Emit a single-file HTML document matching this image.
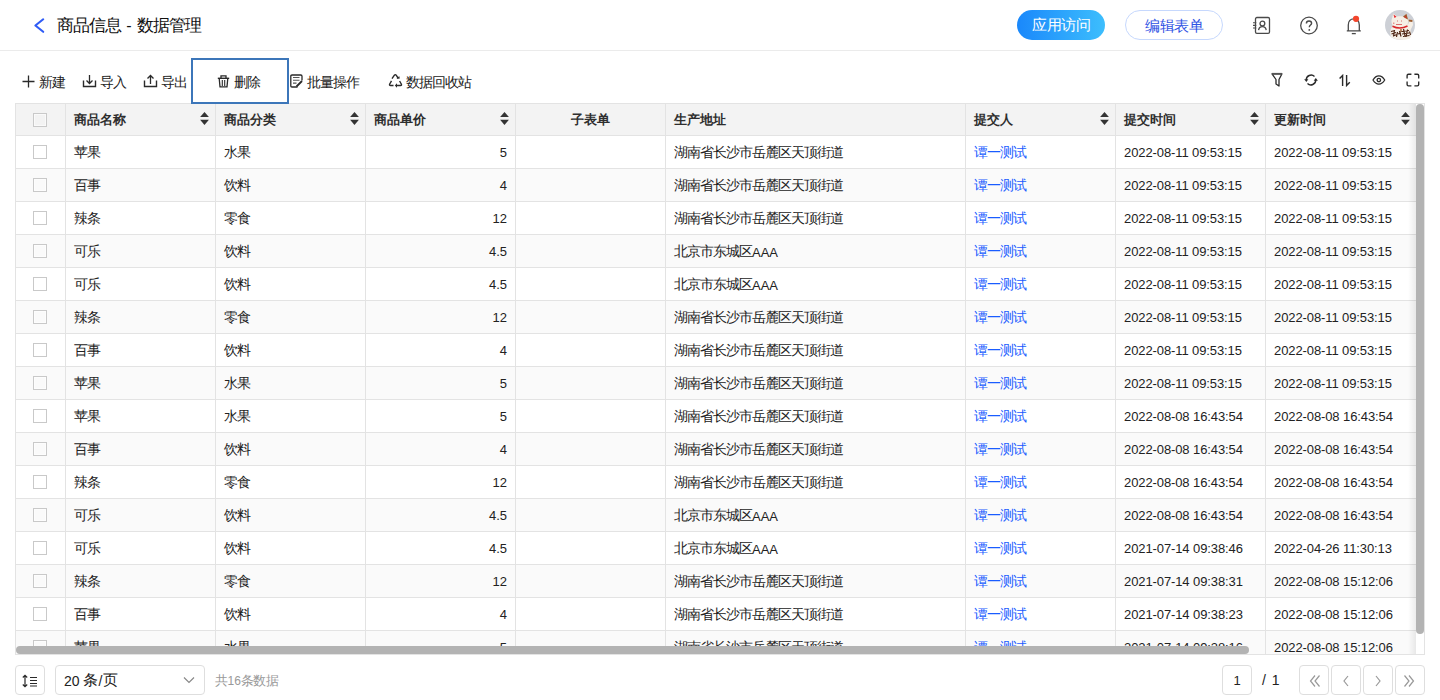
<!DOCTYPE html><html><head><meta charset="utf-8"><title>商品信息 - 数据管理</title><style>
*{box-sizing:border-box;margin:0;padding:0}
html,body{width:1440px;height:700px;overflow:hidden;background:#fff}
body{font-family:"Liberation Sans",sans-serif;color:#222;font-size:13px;position:relative}
.z{font-size:14px;letter-spacing:-1px;position:relative;top:-1px}
.abs{position:absolute}
.z15{font-size:15px;letter-spacing:-1px;position:relative;top:-1px}
.z13{font-size:12.5px;letter-spacing:-0.5px;position:relative;top:0}
.hdr{position:absolute;left:0;top:0;width:1440px;height:51px;border-bottom:1px solid #ebebeb}
.title{position:absolute;left:57px;top:15px;word-spacing:0.7px;font-size:16px;line-height:22px;color:#111;white-space:nowrap}
.title .z{font-size:17px;letter-spacing:-1px;top:0}
.btn1{position:absolute;left:1017px;top:10px;width:88px;height:30px;border-radius:15px;background:linear-gradient(90deg,#1a88fb,#3dbefd);color:#fff;font-size:14px;line-height:31px;text-align:center}
.btn1 .z,.btn2 .z{font-size:14.5px;letter-spacing:-0.5px;top:0}
.btn2{position:absolute;left:1125px;top:10px;width:98px;height:30px;border-radius:15px;border:1px solid #c6d8fd;color:#2f52e4;font-size:14px;line-height:30px;text-align:center}
.tb{position:absolute;top:73px;height:20px;line-height:20px;font-size:13px;color:#222;white-space:nowrap}
.delbox{position:absolute;left:191px;top:58px;width:98px;height:46px;border:2px solid #3c76b9;z-index:5}
.table{position:absolute;left:15px;top:103px;width:1410px;height:552px;border:1px solid #e3e3e3;overflow:hidden;background:#fff}
.cell{position:absolute;height:32px;line-height:34px;white-space:nowrap;font-size:13px;color:#222}
.hc{font-weight:bold;color:#2e2e2e}
.hc .z{font-size:13px;letter-spacing:0;top:0}
.sort{position:absolute}
.cb{position:absolute;width:14px;height:14px;border:1px solid #c9c9c9;box-shadow:inset 0 0 0 1px rgba(255,255,255,0.6)}
.link{color:#1a5cff}
.pg{position:absolute;top:665px;width:30px;height:30px;border:1px solid #dedede;border-radius:4px;background:#fff}
</style></head><body>
<div class="hdr"></div>
<svg class="abs" style="left:32px;top:16px" width="15" height="19" viewBox="0 0 15 19"><path d="M11.2 3.3L3.4 9.5L11.2 15.8" fill="none" stroke="#2f5cf6" stroke-width="2.1" stroke-linecap="round" stroke-linejoin="round"/></svg>
<div class="title"><span class="z">商品信息</span> - <span class="z">数据管理</span></div>
<div class="btn1"><span class="z">应用访问</span></div>
<div class="btn2"><span class="z">编辑表单</span></div>
<svg class="abs" style="left:1252px;top:16px" width="20" height="20" viewBox="0 0 20 20"><rect x="3.5" y="1.5" width="14" height="15.8" rx="1.4" fill="none" stroke="#4a4a4a" stroke-width="1.3"/><circle cx="10.4" cy="7.6" r="2.4" fill="none" stroke="#4a4a4a" stroke-width="1.3"/><path d="M6.6 14.2C6.9 11.8 8.4 10.7 10.4 10.7C12.4 10.7 13.9 11.8 14.2 14.2" fill="none" stroke="#4a4a4a" stroke-width="1.3"/><path d="M1 6.7H4.3M1 9.4H4.3M1 12H4.3" stroke="#4a4a4a" stroke-width="1.1"/></svg>
<svg class="abs" style="left:1299px;top:16px" width="20" height="20" viewBox="0 0 20 20"><circle cx="10" cy="9.5" r="8.3" fill="none" stroke="#4a4a4a" stroke-width="1.3"/><path d="M7.4 7.6C7.4 6 8.6 5 10 5C11.5 5 12.6 6 12.6 7.3C12.6 9 10.3 9.2 10.3 11.2" fill="none" stroke="#4a4a4a" stroke-width="1.4"/><circle cx="10.3" cy="13.9" r="0.9" fill="#4a4a4a"/></svg>
<svg class="abs" style="left:1344px;top:14px" width="20" height="22" viewBox="0 0 20 22"><path d="M2.8 16.8H16.8M4.3 16.8V11C4.3 7.3 6.6 4.8 9.8 4.8C13 4.8 15.3 7.3 15.3 11V16.8" fill="none" stroke="#4a4a4a" stroke-width="1.3"/><path d="M7.8 19.6H11.8" stroke="#4a4a4a" stroke-width="1.3"/><circle cx="12" cy="4.8" r="3.1" fill="#f3452c"/></svg>
<svg class="abs" style="left:1385px;top:10px" width="30" height="30" viewBox="0 0 30 30"><circle cx="15" cy="15" r="15" fill="#cdd0d6"/>
<path d="M6 27C4.5 22 5.5 18 8 16C6.5 14 6 11 7 8.5L8.2 3.5L12 6.5C14 6 16 6 18 6.6L21.5 3.8L23 9.5C23.5 11 23.3 13 22.3 14.8L24 13L23.5 9.5L27.5 10L28 15L25.5 20C27 23 26 27 25 28.5C20 30.5 11 30.5 6 27Z" fill="#f6efe6"/>
<path d="M8.5 4.5L9.5 8L11.5 6.8Z" fill="#e8252b"/><path d="M18 6.6L21.5 3.8L23 9.5C21.5 9 19.5 8 18 6.6Z" fill="#9b5b2e"/><path d="M20.2 5.5L21.8 8.3L19.8 7.4Z" fill="#e8252b"/>
<path d="M23.5 9.5L27.5 10L27.3 12L23.8 11.5Z" fill="#9b5b2e"/>
<path d="M8.8 12.5V14M11 14.5H17M12 11H13M16 11H17" stroke="#d76060" stroke-width="0.9"/>
<path d="M7.5 16.2Q15 19.8 22.5 16" stroke="#d9262a" stroke-width="1.6" fill="none"/>
<path d="M16 19V22" stroke="#a06030" stroke-width="1.4"/>
<path d="M6 21.5L10 20.5M6.5 24L11 22.5M8 26L12 24.5M9.5 20L8.5 26.5M12.5 22L11.5 27M13 24L16 23M14.5 21L16 26.5M18.5 19L20 26M16.5 21.5L24 20.5M17 24L24 23M18 26.5L24.5 25.5M22.5 19.5L21 27M24.5 21.5L25.5 25" stroke="#4e2412" stroke-width="1.2"/>
</svg>
<div class="delbox"></div>
<svg class="abs" style="left:22px;top:75px" width="13" height="13" viewBox="0 0 13 13"><path d="M6.5 0.5V12.5M0.5 6.5H12.5" stroke="#2a2a2a" stroke-width="1.3"/></svg>
<div class="tb" style="left:39px"><span class="z">新建</span></div>
<svg class="abs" style="left:82px;top:74px" width="15" height="14" viewBox="0 0 15 14"><path d="M1.5 6.5V12.5H13.5V6.5" fill="none" stroke="#2a2a2a" stroke-width="1.4"/><path d="M7.5 1V9.5M4.5 6.5L7.5 9.5L10.5 6.5" fill="none" stroke="#2a2a2a" stroke-width="1.3"/></svg>
<div class="tb" style="left:100px"><span class="z">导入</span></div>
<svg class="abs" style="left:143px;top:74px" width="15" height="14" viewBox="0 0 15 14"><path d="M1.5 6.5V12.5H13.5V6.5" fill="none" stroke="#2a2a2a" stroke-width="1.4"/><path d="M7.5 10V1.5M4.5 4.5L7.5 1.5L10.5 4.5" fill="none" stroke="#2a2a2a" stroke-width="1.3"/></svg>
<div class="tb" style="left:161px"><span class="z">导出</span></div>
<svg class="abs" style="left:216px;top:73px" width="15" height="16" viewBox="0 0 15 16"><path d="M1.8 5.3H13.2" stroke="#2a2a2a" stroke-width="1.4"/><path d="M5 5V2.8H10V5" fill="none" stroke="#2a2a2a" stroke-width="1.3"/><path d="M3.2 5.3L4 13.8H11L11.8 5.3" fill="none" stroke="#2a2a2a" stroke-width="1.3"/><path d="M6.3 7V13M8.7 7V13" stroke="#2a2a2a" stroke-width="1.1"/></svg>
<div class="tb" style="left:234px"><span class="z">删除</span></div>
<svg class="abs" style="left:289px;top:73px" width="15" height="16" viewBox="0 0 15 16"><path d="M8.5 14H3C2.2 14 1.8 13.6 1.8 12.8V3.2C1.8 2.4 2.2 2 3 2H11.8C12.6 2 13 2.4 13 3.2V7.5" fill="none" stroke="#2a2a2a" stroke-width="1.3"/><path d="M4 4.5H10.5M4 7.3H10.5M4 10.1H7.5" stroke="#555" stroke-width="1.1"/><path d="M7.5 13.5L13 8" stroke="#2a2a2a" stroke-width="1.8"/></svg>
<div class="tb" style="left:307px"><span class="z">批量操作</span></div>
<svg class="abs" style="left:384px;top:70px" width="24" height="22" viewBox="0 0 24 22"><path d="M8 8.7L10.4 5.2Q11.3 4.1 12.2 5.2L14 8" fill="none" stroke="#2a2a2a" stroke-width="1.4"/><path d="M12.6 8.9L15.8 8.6L15.2 6Z" fill="#2a2a2a"/><path d="M7.5 10.8L5.6 14.2Q5.2 15.5 6.5 15.5H9.5" fill="none" stroke="#2a2a2a" stroke-width="1.4"/><path d="M15.6 11L17.4 14.2Q17.9 15.5 16.6 15.5H12.5" fill="none" stroke="#2a2a2a" stroke-width="1.4"/><path d="M13 13.3L10.8 15.5L13 17.7Z" fill="#2a2a2a"/></svg>
<div class="tb" style="left:406px"><span class="z">数据回收站</span></div>
<svg class="abs" style="left:1270px;top:72px" width="14" height="16" viewBox="0 0 14 16"><path d="M2 1.8H12L9 7.5V14L6 12V7.5Z" fill="none" stroke="#2a2a2a" stroke-width="1.3" stroke-linejoin="round"/><path d="M2 1.8H12" stroke="#555" stroke-width="1.8"/></svg>
<svg class="abs" style="left:1303px;top:73px" width="16" height="14" viewBox="0 0 16 14"><path d="M3.2 7A4.9 4.9 0 0 1 11.5 3.5" fill="none" stroke="#2a2a2a" stroke-width="1.4"/><path d="M1.2 6.2H5.4L3.3 9Z" fill="#2a2a2a"/><path d="M4.5 10.5A4.9 4.9 0 0 0 12.8 7" fill="none" stroke="#2a2a2a" stroke-width="1.4"/><path d="M10.7 7.8H14.9L12.8 5Z" fill="#2a2a2a"/></svg>
<svg class="abs" style="left:1338px;top:74px" width="14" height="13" viewBox="0 0 14 13"><path d="M4.6 12V1.5L1.6 4.6" fill="none" stroke="#2a2a2a" stroke-width="1.4"/><path d="M8.6 1V11.5L11.8 8.2" fill="none" stroke="#2a2a2a" stroke-width="1.4"/></svg>
<svg class="abs" style="left:1372px;top:75px" width="15" height="11" viewBox="0 0 15 11"><path d="M1 5C2.6 2.3 4.5 0.9 6.85 0.9C9.2 0.9 11.1 2.3 12.7 5C11.1 7.7 9.2 9.1 6.85 9.1C4.5 9.1 2.6 7.7 1 5Z" fill="none" stroke="#2a2a2a" stroke-width="1.25"/><circle cx="6.85" cy="5" r="1.7" fill="none" stroke="#2a2a2a" stroke-width="1.3"/></svg>
<svg class="abs" style="left:1406px;top:73px" width="14" height="14" viewBox="0 0 14 14"><path d="M1.1 5.6V2.6C1.1 1.8 1.7 1.2 2.5 1.2H5.4M8.4 1.2H11.3C12.1 1.2 12.7 1.8 12.7 2.6V5.6M12.7 8.4V11.4C12.7 12.2 12.1 12.8 11.3 12.8H8.4M5.4 12.8H2.5C1.7 12.8 1.1 12.2 1.1 11.4V8.4" fill="none" stroke="#2a2a2a" stroke-width="1.35"/></svg>
<div class="table">
<div class="abs" style="left:0;top:0;width:1400px;height:31px;background:#f3f3f3"></div>
<div class="abs" style="left:0;top:32px;width:1400px;height:32px;background:#fff"></div>
<div class="abs" style="left:0;top:65px;width:1400px;height:32px;background:#fafafa"></div>
<div class="abs" style="left:0;top:98px;width:1400px;height:32px;background:#fff"></div>
<div class="abs" style="left:0;top:131px;width:1400px;height:32px;background:#fafafa"></div>
<div class="abs" style="left:0;top:164px;width:1400px;height:32px;background:#fff"></div>
<div class="abs" style="left:0;top:197px;width:1400px;height:32px;background:#fafafa"></div>
<div class="abs" style="left:0;top:230px;width:1400px;height:32px;background:#fff"></div>
<div class="abs" style="left:0;top:263px;width:1400px;height:32px;background:#fafafa"></div>
<div class="abs" style="left:0;top:296px;width:1400px;height:32px;background:#fff"></div>
<div class="abs" style="left:0;top:329px;width:1400px;height:32px;background:#fafafa"></div>
<div class="abs" style="left:0;top:362px;width:1400px;height:32px;background:#fff"></div>
<div class="abs" style="left:0;top:395px;width:1400px;height:32px;background:#fafafa"></div>
<div class="abs" style="left:0;top:428px;width:1400px;height:32px;background:#fff"></div>
<div class="abs" style="left:0;top:461px;width:1400px;height:32px;background:#fafafa"></div>
<div class="abs" style="left:0;top:494px;width:1400px;height:32px;background:#fff"></div>
<div class="abs" style="left:0;top:527px;width:1400px;height:32px;background:#fafafa"></div>
<div class="abs" style="left:0;top:31px;width:1400px;height:1px;background:#e3e3e3"></div>
<div class="abs" style="left:0;top:64px;width:1400px;height:1px;background:#e3e3e3"></div>
<div class="abs" style="left:0;top:97px;width:1400px;height:1px;background:#e3e3e3"></div>
<div class="abs" style="left:0;top:130px;width:1400px;height:1px;background:#e3e3e3"></div>
<div class="abs" style="left:0;top:163px;width:1400px;height:1px;background:#e3e3e3"></div>
<div class="abs" style="left:0;top:196px;width:1400px;height:1px;background:#e3e3e3"></div>
<div class="abs" style="left:0;top:229px;width:1400px;height:1px;background:#e3e3e3"></div>
<div class="abs" style="left:0;top:262px;width:1400px;height:1px;background:#e3e3e3"></div>
<div class="abs" style="left:0;top:295px;width:1400px;height:1px;background:#e3e3e3"></div>
<div class="abs" style="left:0;top:328px;width:1400px;height:1px;background:#e3e3e3"></div>
<div class="abs" style="left:0;top:361px;width:1400px;height:1px;background:#e3e3e3"></div>
<div class="abs" style="left:0;top:394px;width:1400px;height:1px;background:#e3e3e3"></div>
<div class="abs" style="left:0;top:427px;width:1400px;height:1px;background:#e3e3e3"></div>
<div class="abs" style="left:0;top:460px;width:1400px;height:1px;background:#e3e3e3"></div>
<div class="abs" style="left:0;top:493px;width:1400px;height:1px;background:#e3e3e3"></div>
<div class="abs" style="left:0;top:526px;width:1400px;height:1px;background:#e3e3e3"></div>
<div class="abs" style="left:0;top:559px;width:1400px;height:1px;background:#e3e3e3"></div>
<div class="abs" style="left:49px;top:0;width:1px;height:560px;background:#e3e3e3"></div>
<div class="abs" style="left:199px;top:0;width:1px;height:560px;background:#e3e3e3"></div>
<div class="abs" style="left:349px;top:0;width:1px;height:560px;background:#e3e3e3"></div>
<div class="abs" style="left:499px;top:0;width:1px;height:560px;background:#e3e3e3"></div>
<div class="abs" style="left:649px;top:0;width:1px;height:560px;background:#e3e3e3"></div>
<div class="abs" style="left:949px;top:0;width:1px;height:560px;background:#e3e3e3"></div>
<div class="abs" style="left:1099px;top:0;width:1px;height:560px;background:#e3e3e3"></div>
<div class="abs" style="left:1249px;top:0;width:1px;height:560px;background:#e3e3e3"></div>
<div class="cell hc" style="left:58px;top:0;height:31px;line-height:32px"><span class="z">商品名称</span></div>
<svg class="sort" style="left:183.5px;top:7px" width="9" height="14" viewBox="0 0 9 14"><path d="M4.5 1L8.9 5.9H0.1Z" fill="#333"/><path d="M4.5 13.9L8.9 8.8H0.1Z" fill="#333"/></svg>
<div class="cell hc" style="left:208px;top:0;height:31px;line-height:32px"><span class="z">商品分类</span></div>
<svg class="sort" style="left:333.5px;top:7px" width="9" height="14" viewBox="0 0 9 14"><path d="M4.5 1L8.9 5.9H0.1Z" fill="#333"/><path d="M4.5 13.9L8.9 8.8H0.1Z" fill="#333"/></svg>
<div class="cell hc" style="left:358px;top:0;height:31px;line-height:32px"><span class="z">商品单价</span></div>
<svg class="sort" style="left:483.5px;top:7px" width="9" height="14" viewBox="0 0 9 14"><path d="M4.5 1L8.9 5.9H0.1Z" fill="#333"/><path d="M4.5 13.9L8.9 8.8H0.1Z" fill="#333"/></svg>
<div class="cell hc" style="left:500px;top:0;width:149px;height:31px;line-height:32px;text-align:center"><span class="z">子表单</span></div>
<div class="cell hc" style="left:658px;top:0;height:31px;line-height:32px"><span class="z">生产地址</span></div>
<div class="cell hc" style="left:958px;top:0;height:31px;line-height:32px"><span class="z">提交人</span></div>
<svg class="sort" style="left:1083.5px;top:7px" width="9" height="14" viewBox="0 0 9 14"><path d="M4.5 1L8.9 5.9H0.1Z" fill="#333"/><path d="M4.5 13.9L8.9 8.8H0.1Z" fill="#333"/></svg>
<div class="cell hc" style="left:1108px;top:0;height:31px;line-height:32px"><span class="z">提交时间</span></div>
<svg class="sort" style="left:1233.5px;top:7px" width="9" height="14" viewBox="0 0 9 14"><path d="M4.5 1L8.9 5.9H0.1Z" fill="#333"/><path d="M4.5 13.9L8.9 8.8H0.1Z" fill="#333"/></svg>
<div class="cell hc" style="left:1258px;top:0;height:31px;line-height:32px"><span class="z">更新时间</span></div>
<svg class="sort" style="left:1384.5px;top:7px" width="9" height="14" viewBox="0 0 9 14"><path d="M4.5 1L8.9 5.9H0.1Z" fill="#333"/><path d="M4.5 13.9L8.9 8.8H0.1Z" fill="#333"/></svg>
<div class="cb" style="left:17px;top:9px"></div>
<div class="cb" style="left:17px;top:41px"></div>
<div class="cell" style="left:58px;top:32px"><span class="z">苹果</span></div>
<div class="cell" style="left:208px;top:32px"><span class="z">水果</span></div>
<div class="cell" style="left:350px;width:141px;top:32px;text-align:right">5</div>
<div class="cell" style="left:658px;top:32px"><span class="z">湖南省长沙市岳麓区天顶街道</span></div>
<div class="cell link" style="left:958px;top:32px"><span class="z">谭一测试</span></div>
<div class="cell" style="left:1108px;top:32px;letter-spacing:-0.1px">2022-08-11 09:53:15</div>
<div class="cell" style="left:1258px;top:32px;letter-spacing:-0.1px">2022-08-11 09:53:15</div>
<div class="cb" style="left:17px;top:74px"></div>
<div class="cell" style="left:58px;top:65px"><span class="z">百事</span></div>
<div class="cell" style="left:208px;top:65px"><span class="z">饮料</span></div>
<div class="cell" style="left:350px;width:141px;top:65px;text-align:right">4</div>
<div class="cell" style="left:658px;top:65px"><span class="z">湖南省长沙市岳麓区天顶街道</span></div>
<div class="cell link" style="left:958px;top:65px"><span class="z">谭一测试</span></div>
<div class="cell" style="left:1108px;top:65px;letter-spacing:-0.1px">2022-08-11 09:53:15</div>
<div class="cell" style="left:1258px;top:65px;letter-spacing:-0.1px">2022-08-11 09:53:15</div>
<div class="cb" style="left:17px;top:107px"></div>
<div class="cell" style="left:58px;top:98px"><span class="z">辣条</span></div>
<div class="cell" style="left:208px;top:98px"><span class="z">零食</span></div>
<div class="cell" style="left:350px;width:141px;top:98px;text-align:right">12</div>
<div class="cell" style="left:658px;top:98px"><span class="z">湖南省长沙市岳麓区天顶街道</span></div>
<div class="cell link" style="left:958px;top:98px"><span class="z">谭一测试</span></div>
<div class="cell" style="left:1108px;top:98px;letter-spacing:-0.1px">2022-08-11 09:53:15</div>
<div class="cell" style="left:1258px;top:98px;letter-spacing:-0.1px">2022-08-11 09:53:15</div>
<div class="cb" style="left:17px;top:140px"></div>
<div class="cell" style="left:58px;top:131px"><span class="z">可乐</span></div>
<div class="cell" style="left:208px;top:131px"><span class="z">饮料</span></div>
<div class="cell" style="left:350px;width:141px;top:131px;text-align:right">4.5</div>
<div class="cell" style="left:658px;top:131px"><span class="z">北京市东城区</span>AAA</div>
<div class="cell link" style="left:958px;top:131px"><span class="z">谭一测试</span></div>
<div class="cell" style="left:1108px;top:131px;letter-spacing:-0.1px">2022-08-11 09:53:15</div>
<div class="cell" style="left:1258px;top:131px;letter-spacing:-0.1px">2022-08-11 09:53:15</div>
<div class="cb" style="left:17px;top:173px"></div>
<div class="cell" style="left:58px;top:164px"><span class="z">可乐</span></div>
<div class="cell" style="left:208px;top:164px"><span class="z">饮料</span></div>
<div class="cell" style="left:350px;width:141px;top:164px;text-align:right">4.5</div>
<div class="cell" style="left:658px;top:164px"><span class="z">北京市东城区</span>AAA</div>
<div class="cell link" style="left:958px;top:164px"><span class="z">谭一测试</span></div>
<div class="cell" style="left:1108px;top:164px;letter-spacing:-0.1px">2022-08-11 09:53:15</div>
<div class="cell" style="left:1258px;top:164px;letter-spacing:-0.1px">2022-08-11 09:53:15</div>
<div class="cb" style="left:17px;top:206px"></div>
<div class="cell" style="left:58px;top:197px"><span class="z">辣条</span></div>
<div class="cell" style="left:208px;top:197px"><span class="z">零食</span></div>
<div class="cell" style="left:350px;width:141px;top:197px;text-align:right">12</div>
<div class="cell" style="left:658px;top:197px"><span class="z">湖南省长沙市岳麓区天顶街道</span></div>
<div class="cell link" style="left:958px;top:197px"><span class="z">谭一测试</span></div>
<div class="cell" style="left:1108px;top:197px;letter-spacing:-0.1px">2022-08-11 09:53:15</div>
<div class="cell" style="left:1258px;top:197px;letter-spacing:-0.1px">2022-08-11 09:53:15</div>
<div class="cb" style="left:17px;top:239px"></div>
<div class="cell" style="left:58px;top:230px"><span class="z">百事</span></div>
<div class="cell" style="left:208px;top:230px"><span class="z">饮料</span></div>
<div class="cell" style="left:350px;width:141px;top:230px;text-align:right">4</div>
<div class="cell" style="left:658px;top:230px"><span class="z">湖南省长沙市岳麓区天顶街道</span></div>
<div class="cell link" style="left:958px;top:230px"><span class="z">谭一测试</span></div>
<div class="cell" style="left:1108px;top:230px;letter-spacing:-0.1px">2022-08-11 09:53:15</div>
<div class="cell" style="left:1258px;top:230px;letter-spacing:-0.1px">2022-08-11 09:53:15</div>
<div class="cb" style="left:17px;top:272px"></div>
<div class="cell" style="left:58px;top:263px"><span class="z">苹果</span></div>
<div class="cell" style="left:208px;top:263px"><span class="z">水果</span></div>
<div class="cell" style="left:350px;width:141px;top:263px;text-align:right">5</div>
<div class="cell" style="left:658px;top:263px"><span class="z">湖南省长沙市岳麓区天顶街道</span></div>
<div class="cell link" style="left:958px;top:263px"><span class="z">谭一测试</span></div>
<div class="cell" style="left:1108px;top:263px;letter-spacing:-0.1px">2022-08-11 09:53:15</div>
<div class="cell" style="left:1258px;top:263px;letter-spacing:-0.1px">2022-08-11 09:53:15</div>
<div class="cb" style="left:17px;top:305px"></div>
<div class="cell" style="left:58px;top:296px"><span class="z">苹果</span></div>
<div class="cell" style="left:208px;top:296px"><span class="z">水果</span></div>
<div class="cell" style="left:350px;width:141px;top:296px;text-align:right">5</div>
<div class="cell" style="left:658px;top:296px"><span class="z">湖南省长沙市岳麓区天顶街道</span></div>
<div class="cell link" style="left:958px;top:296px"><span class="z">谭一测试</span></div>
<div class="cell" style="left:1108px;top:296px;letter-spacing:-0.1px">2022-08-08 16:43:54</div>
<div class="cell" style="left:1258px;top:296px;letter-spacing:-0.1px">2022-08-08 16:43:54</div>
<div class="cb" style="left:17px;top:338px"></div>
<div class="cell" style="left:58px;top:329px"><span class="z">百事</span></div>
<div class="cell" style="left:208px;top:329px"><span class="z">饮料</span></div>
<div class="cell" style="left:350px;width:141px;top:329px;text-align:right">4</div>
<div class="cell" style="left:658px;top:329px"><span class="z">湖南省长沙市岳麓区天顶街道</span></div>
<div class="cell link" style="left:958px;top:329px"><span class="z">谭一测试</span></div>
<div class="cell" style="left:1108px;top:329px;letter-spacing:-0.1px">2022-08-08 16:43:54</div>
<div class="cell" style="left:1258px;top:329px;letter-spacing:-0.1px">2022-08-08 16:43:54</div>
<div class="cb" style="left:17px;top:371px"></div>
<div class="cell" style="left:58px;top:362px"><span class="z">辣条</span></div>
<div class="cell" style="left:208px;top:362px"><span class="z">零食</span></div>
<div class="cell" style="left:350px;width:141px;top:362px;text-align:right">12</div>
<div class="cell" style="left:658px;top:362px"><span class="z">湖南省长沙市岳麓区天顶街道</span></div>
<div class="cell link" style="left:958px;top:362px"><span class="z">谭一测试</span></div>
<div class="cell" style="left:1108px;top:362px;letter-spacing:-0.1px">2022-08-08 16:43:54</div>
<div class="cell" style="left:1258px;top:362px;letter-spacing:-0.1px">2022-08-08 16:43:54</div>
<div class="cb" style="left:17px;top:404px"></div>
<div class="cell" style="left:58px;top:395px"><span class="z">可乐</span></div>
<div class="cell" style="left:208px;top:395px"><span class="z">饮料</span></div>
<div class="cell" style="left:350px;width:141px;top:395px;text-align:right">4.5</div>
<div class="cell" style="left:658px;top:395px"><span class="z">北京市东城区</span>AAA</div>
<div class="cell link" style="left:958px;top:395px"><span class="z">谭一测试</span></div>
<div class="cell" style="left:1108px;top:395px;letter-spacing:-0.1px">2022-08-08 16:43:54</div>
<div class="cell" style="left:1258px;top:395px;letter-spacing:-0.1px">2022-08-08 16:43:54</div>
<div class="cb" style="left:17px;top:437px"></div>
<div class="cell" style="left:58px;top:428px"><span class="z">可乐</span></div>
<div class="cell" style="left:208px;top:428px"><span class="z">饮料</span></div>
<div class="cell" style="left:350px;width:141px;top:428px;text-align:right">4.5</div>
<div class="cell" style="left:658px;top:428px"><span class="z">北京市东城区</span>AAA</div>
<div class="cell link" style="left:958px;top:428px"><span class="z">谭一测试</span></div>
<div class="cell" style="left:1108px;top:428px;letter-spacing:-0.1px">2021-07-14 09:38:46</div>
<div class="cell" style="left:1258px;top:428px;letter-spacing:-0.1px">2022-04-26 11:30:13</div>
<div class="cb" style="left:17px;top:470px"></div>
<div class="cell" style="left:58px;top:461px"><span class="z">辣条</span></div>
<div class="cell" style="left:208px;top:461px"><span class="z">零食</span></div>
<div class="cell" style="left:350px;width:141px;top:461px;text-align:right">12</div>
<div class="cell" style="left:658px;top:461px"><span class="z">湖南省长沙市岳麓区天顶街道</span></div>
<div class="cell link" style="left:958px;top:461px"><span class="z">谭一测试</span></div>
<div class="cell" style="left:1108px;top:461px;letter-spacing:-0.1px">2021-07-14 09:38:31</div>
<div class="cell" style="left:1258px;top:461px;letter-spacing:-0.1px">2022-08-08 15:12:06</div>
<div class="cb" style="left:17px;top:503px"></div>
<div class="cell" style="left:58px;top:494px"><span class="z">百事</span></div>
<div class="cell" style="left:208px;top:494px"><span class="z">饮料</span></div>
<div class="cell" style="left:350px;width:141px;top:494px;text-align:right">4</div>
<div class="cell" style="left:658px;top:494px"><span class="z">湖南省长沙市岳麓区天顶街道</span></div>
<div class="cell link" style="left:958px;top:494px"><span class="z">谭一测试</span></div>
<div class="cell" style="left:1108px;top:494px;letter-spacing:-0.1px">2021-07-14 09:38:23</div>
<div class="cell" style="left:1258px;top:494px;letter-spacing:-0.1px">2022-08-08 15:12:06</div>
<div class="cb" style="left:17px;top:536px"></div>
<div class="cell" style="left:58px;top:527px"><span class="z">苹果</span></div>
<div class="cell" style="left:208px;top:527px"><span class="z">水果</span></div>
<div class="cell" style="left:350px;width:141px;top:527px;text-align:right">5</div>
<div class="cell" style="left:658px;top:527px"><span class="z">湖南省长沙市岳麓区天顶街道</span></div>
<div class="cell link" style="left:958px;top:527px"><span class="z">谭一测试</span></div>
<div class="cell" style="left:1108px;top:527px;letter-spacing:-0.1px">2021-07-14 09:38:16</div>
<div class="cell" style="left:1258px;top:527px;letter-spacing:-0.1px">2022-08-08 15:12:06</div>
<div class="abs" style="left:1392px;top:0;width:8px;height:560px;background:linear-gradient(90deg,rgba(0,0,0,0),rgba(0,0,0,0.075))"></div>
<div class="abs" style="left:1400px;top:0;width:9px;height:560px;background:#fff"></div>
<div class="abs" style="left:1400px;top:0;width:8px;height:530px;border-radius:4px;background:#b3b3b3"></div>
<div class="abs" style="left:0;top:542px;width:1233px;height:8px;border-radius:4px;background:#b3b3b3"></div>
</div>
<div class="pg" style="left:15px"><svg class="abs" style="left:6px;top:8px" width="16" height="14" viewBox="0 0 16 14"><path d="M3 1.3V12.7M0.8 3.5L3 1.3L5.2 3.5M0.8 10.5L3 12.7L5.2 10.5" fill="none" stroke="#2a2a2a" stroke-width="1.2"/><path d="M8 3.5H15M8 6.5H15M8 9.5H15M8 12H15" stroke="#2a2a2a" stroke-width="1.1"/></svg></div>
<div class="abs" style="left:55px;top:665px;width:150px;height:30px;border:1px solid #dedede;border-radius:4px"></div>
<div class="abs" style="left:64px;top:665px;line-height:31px;font-size:14px;color:#222">20 <span class="z15">条</span><span style="padding:0 1px">/</span><span class="z15">页</span></div>
<svg class="abs" style="left:183px;top:676px" width="12" height="8" viewBox="0 0 12 8"><path d="M1 1.5L6 6.5L11 1.5" fill="none" stroke="#888" stroke-width="1.2"/></svg>
<div class="abs" style="left:215px;top:665px;line-height:32px;font-size:12px;color:#999"><span class="z13">共</span>16<span class="z13">条数据</span></div>
<div class="pg" style="left:1222px;text-align:center;line-height:29px;font-size:13px;color:#222">1</div>
<div class="abs" style="left:1262px;top:665px;line-height:31px;font-size:14px;word-spacing:2px;color:#222">/ 1</div>
<div class="pg" style="left:1299px"><svg class="abs" style="left:7px;top:8px" width="14" height="14" viewBox="0 0 14 14"><path d="M8 1.5L3.5 7L8 12.5M12.5 1.5L8 7L12.5 12.5" fill="none" stroke="#999" stroke-width="1.2"/></svg></div>
<div class="pg" style="left:1331px"><svg class="abs" style="left:7px;top:8px" width="14" height="14" viewBox="0 0 14 14"><path d="M9 2L5 7L9 12" fill="none" stroke="#999" stroke-width="1.2"/></svg></div>
<div class="pg" style="left:1363px"><svg class="abs" style="left:7px;top:8px" width="14" height="14" viewBox="0 0 14 14"><path d="M5 2L9 7L5 12" fill="none" stroke="#999" stroke-width="1.2"/></svg></div>
<div class="pg" style="left:1395px"><svg class="abs" style="left:7px;top:8px" width="14" height="14" viewBox="0 0 14 14"><path d="M1.5 1.5L6 7L1.5 12.5M6 1.5L10.5 7L6 12.5" fill="none" stroke="#999" stroke-width="1.2"/></svg></div>
</body></html>
